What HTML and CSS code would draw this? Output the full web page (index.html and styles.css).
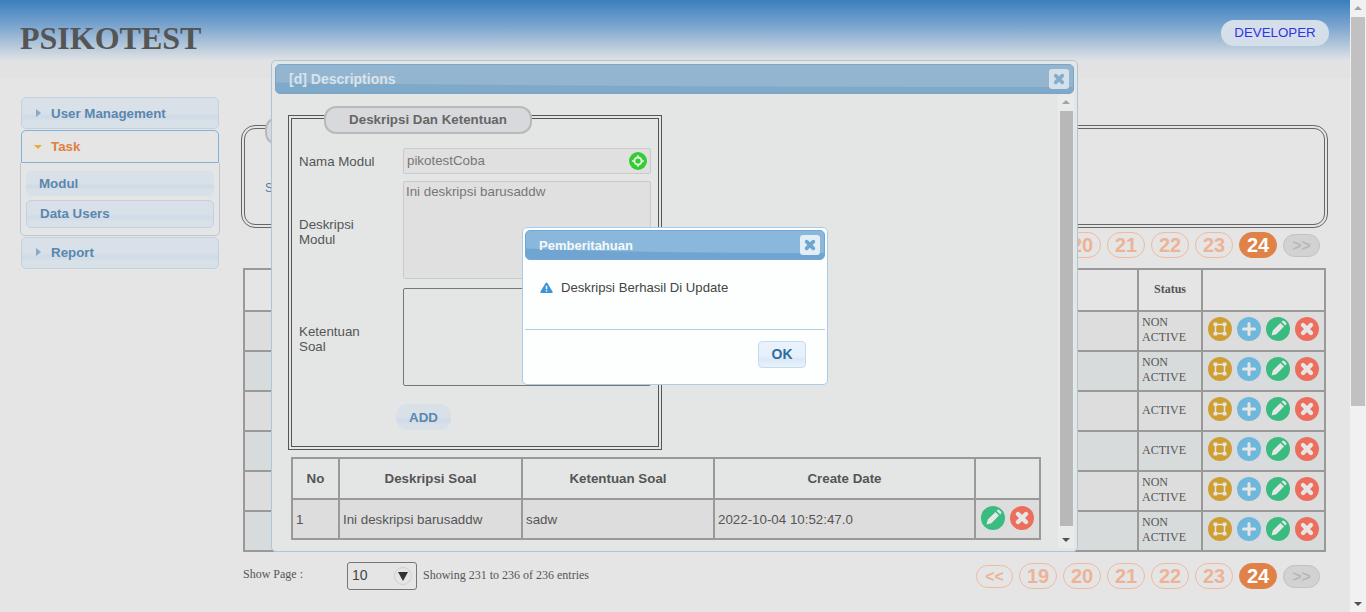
FILE: index.html
```html
<!DOCTYPE html>
<html lang="en">
<head>
	<meta charset="UTF-8">
	<title>Psikotest</title>
	<link rel="stylesheet" href="styles.css">
</head>
<body>
	<svg class="sprite" width="0" height="0">
		<symbol id="ic-expand" viewBox="0 0 24 24">
			<path d="M7.5 7.5h9v9h-9z" fill="none" stroke="currentColor" stroke-width="1.5"/>
			<path d="M5.5 5.5h3.6v3.6H5.5zM14.9 5.5h3.6v3.6h-3.6zM5.5 14.9h3.6v3.6H5.5zM14.9 14.9h3.6v3.6h-3.6z" fill="currentColor"/>
		</symbol>
		<symbol id="ic-plus" viewBox="0 0 24 24">
			<path d="M12 6.5v11M6.5 12h11" fill="none" stroke="currentColor" stroke-width="3" stroke-linecap="round"/>
		</symbol>
		<symbol id="ic-pen" viewBox="0 0 24 24">
			<path d="M5.5 18.5l1.300-4.900 7.600-7.600 3.600 3.600-7.600 7.600zM15.600 4.800l.9-.9a1.200 1.200 0 0 1 1.700 0l1.900 1.900a1.200 1.200 0 0 1 0 1.700l-.9.9z" fill="currentColor"/>
		</symbol>
		<symbol id="ic-cross" viewBox="0 0 24 24">
			<path d="M8 8l8 8M16 8l-8 8" fill="none" stroke="currentColor" stroke-width="4.4" stroke-linecap="round"/>
		</symbol>
	</svg>

	<div class="page">
		<header class="top">
			<h1 class="brand">PSIKOTEST</h1>
			<a class="role" href="#">DEVELOPER</a>
		</header>

		<div class="layout">
			<nav class="side">
				<a class="side-item" href="#"><span class="arrow-right"></span>User Management</a>
				<a class="side-item side-item-open" href="#"><span class="arrow-down"></span>Task</a>
				<div class="side-sub">
					<a class="sub-item sub-plain" href="#">Modul</a>
					<a class="sub-item" href="#">Data Users</a>
				</div>
				<a class="side-item" href="#"><span class="arrow-right"></span>Report</a>
			</nav>

			<main class="content">
				<section class="search-box">
					<div class="search-legend"></div>
					<div class="search-row">Search</div>
				</section>

				<div class="pager">
					<a class="pg pg-small" href="#">&lt;&lt;</a>
					<a class="pg" href="#">19</a>
					<a class="pg" href="#">20</a>
					<a class="pg" href="#">21</a>
					<a class="pg" href="#">22</a>
					<a class="pg" href="#">23</a>
					<a class="pg pg-active" href="#">24</a>
					<a class="pg pg-small pg-off" href="#">&gt;&gt;</a>
				</div>

				<table class="data">
					<colgroup>
						<col class="col-main">
						<col class="col-status">
						<col class="col-act">
					</colgroup>
					<thead>
						<tr><th></th><th>Status</th><th></th></tr>
					</thead>
					<tbody>
						<tr>
							<td></td><td>NON ACTIVE</td>
							<td><div class="acts">
								<span class="ic ic-gold"><svg><use href="#ic-expand"/></svg></span>
								<span class="ic ic-blue"><svg><use href="#ic-plus"/></svg></span>
								<span class="ic ic-green"><svg><use href="#ic-pen"/></svg></span>
								<span class="ic ic-red"><svg><use href="#ic-cross"/></svg></span>
							</div></td>
						</tr>
						<tr>
							<td></td><td>NON ACTIVE</td>
							<td><div class="acts">
								<span class="ic ic-gold"><svg><use href="#ic-expand"/></svg></span>
								<span class="ic ic-blue"><svg><use href="#ic-plus"/></svg></span>
								<span class="ic ic-green"><svg><use href="#ic-pen"/></svg></span>
								<span class="ic ic-red"><svg><use href="#ic-cross"/></svg></span>
							</div></td>
						</tr>
						<tr>
							<td></td><td>ACTIVE</td>
							<td><div class="acts">
								<span class="ic ic-gold"><svg><use href="#ic-expand"/></svg></span>
								<span class="ic ic-blue"><svg><use href="#ic-plus"/></svg></span>
								<span class="ic ic-green"><svg><use href="#ic-pen"/></svg></span>
								<span class="ic ic-red"><svg><use href="#ic-cross"/></svg></span>
							</div></td>
						</tr>
						<tr>
							<td></td><td>ACTIVE</td>
							<td><div class="acts">
								<span class="ic ic-gold"><svg><use href="#ic-expand"/></svg></span>
								<span class="ic ic-blue"><svg><use href="#ic-plus"/></svg></span>
								<span class="ic ic-green"><svg><use href="#ic-pen"/></svg></span>
								<span class="ic ic-red"><svg><use href="#ic-cross"/></svg></span>
							</div></td>
						</tr>
						<tr>
							<td></td><td>NON ACTIVE</td>
							<td><div class="acts">
								<span class="ic ic-gold"><svg><use href="#ic-expand"/></svg></span>
								<span class="ic ic-blue"><svg><use href="#ic-plus"/></svg></span>
								<span class="ic ic-green"><svg><use href="#ic-pen"/></svg></span>
								<span class="ic ic-red"><svg><use href="#ic-cross"/></svg></span>
							</div></td>
						</tr>
						<tr>
							<td></td><td>NON ACTIVE</td>
							<td><div class="acts">
								<span class="ic ic-gold"><svg><use href="#ic-expand"/></svg></span>
								<span class="ic ic-blue"><svg><use href="#ic-plus"/></svg></span>
								<span class="ic ic-green"><svg><use href="#ic-pen"/></svg></span>
								<span class="ic ic-red"><svg><use href="#ic-cross"/></svg></span>
							</div></td>
						</tr>
					</tbody>
				</table>

				<div class="foot">
					<span class="foot-label">Show Page :</span>
					<div class="select"><span class="select-val">10</span><span class="select-btn"></span></div>
					<span class="foot-info">Showing 231 to 236 of 236 entries</span>
					<div class="pager pager-foot">
						<a class="pg pg-small" href="#">&lt;&lt;</a>
						<a class="pg" href="#">19</a>
						<a class="pg" href="#">20</a>
						<a class="pg" href="#">21</a>
						<a class="pg" href="#">22</a>
						<a class="pg" href="#">23</a>
						<a class="pg pg-active" href="#">24</a>
						<a class="pg pg-small pg-off" href="#">&gt;&gt;</a>
					</div>
				</div>
			</main>
		</div>
	</div>

	<div class="pagebar">
		<span class="up"></span>
		<span class="thumb"></span>
		<span class="down"></span>
	</div>

	<!-- dialog deskripsi -->
	<div class="modal">
		<div class="title title-dim">
			<span>[d] Descriptions</span>
			<a class="close close-dim" href="#"><svg><use href="#ic-cross"/></svg></a>
		</div>
		<div class="modal-body">
			<div class="modal-main">
				<div class="field">
					<div class="field-legend">Deskripsi Dan Ketentuan</div>
					<div class="form">
						<label>Nama Modul</label>
						<div class="input">
							<span class="input-val">pikotestCoba</span>
							<svg class="target" viewBox="0 0 18 18">
								<circle cx="9" cy="9" r="9" fill="#33cc33"/>
								<circle cx="9" cy="9" r="3.6" fill="none" stroke="#dff2df" stroke-width="2"/>
								<path d="M9 3v2.4M9 12.6V15M3 9h2.4M12.6 9H15" stroke="#dff2df" stroke-width="1.4"/>
							</svg>
						</div>
						<label class="label-mid">Deskripsi<br>Modul</label>
						<div class="area area-off">Ini deskripsi barusaddw</div>
						<label class="label-low">Ketentuan<br>Soal</label>
						<div class="area"></div>
						<a class="add" href="#">ADD</a>
					</div>
				</div>

				<table class="soal">
					<colgroup>
						<col class="c-no">
						<col class="c-desc">
						<col class="c-ket">
						<col class="c-date">
						<col class="c-act">
					</colgroup>
					<thead>
						<tr><th>No</th><th>Deskripsi Soal</th><th>Ketentuan Soal</th><th>Create Date</th><th></th></tr>
					</thead>
					<tbody>
						<tr>
							<td>1</td>
							<td>Ini deskripsi barusaddw</td>
							<td>sadw</td>
							<td>2022-10-04 10:52:47.0</td>
							<td><div class="acts">
								<span class="ic ic-green"><svg><use href="#ic-pen"/></svg></span>
								<span class="ic ic-red"><svg><use href="#ic-cross"/></svg></span>
							</div></td>
						</tr>
					</tbody>
				</table>
			</div>
			<div class="modalbar">
				<span class="up"></span>
				<span class="thumb"></span>
				<span class="down"></span>
			</div>
		</div>
	</div>

	<!-- pemberitahuan -->
	<div class="alert">
		<div class="title">
			<span>Pemberitahuan</span>
			<a class="close" href="#"><svg><use href="#ic-cross"/></svg></a>
		</div>
		<div class="alert-msg">
			<svg class="warn" viewBox="0 0 14 12"><path d="M7 .5c.5 0 .8.3 1 .6l5.700 9.600c.3.6 0 1.300-.8 1.300H1.100c-.8 0-1.100-.7-.8-1.300L6 1.100c.2-.3.5-.6 1-.6z" fill="#3f94d8"/><path d="M6.200 4h1.600v4H6.200zM6.200 8.900h1.600v1.500H6.200z" fill="#fff"/></svg>
			<span>Deskripsi Berhasil Di Update</span>
		</div>
		<div class="alert-foot">
			<a class="ok" href="#">OK</a>
		</div>
	</div>
</body>
</html>
```

FILE: styles.css
```css
* {
	margin: 0;
	padding: 0;
	box-sizing: border-box;
}
html, body {
	height: 100%;
	overflow: hidden;
}
body {
	display: flex;
	background: #e5e5e5;
	font-family: "Liberation Sans", Arial, sans-serif;
	font-size: 13.33px;
	color: #555;
}
a {
	text-decoration: none;
}
.sprite {
	position: absolute;
}
.page {
	flex: 1;
	min-width: 0;
}

/* header */
.top {
	height: 78px;
	padding: 20px 21px 0 20px;
	display: flex;
	justify-content: space-between;
	align-items: flex-start;
	background: linear-gradient(#3a7fbe 0, #7ba5cf 26px, #dee1e4 60px, #e2e2e2 62px);
}
.brand {
	font-family: "Liberation Serif", "Times New Roman", serif;
	font-size: 32px;
	line-height: 36px;
	color: #555;
}
.role {
	width: 108px;
	height: 26px;
	line-height: 26px;
	text-align: center;
	border-radius: 13px;
	background: #d4dfe9;
	color: #3232ea;
}

/* sidebar */
.layout {
	display: flex;
	padding-left: 21px;
}
.side {
	width: 198px;
	margin-top: 19px;
	margin-right: 22px;
	flex: none;
}
.side-item {
	display: flex;
	align-items: center;
	height: 32px;
	padding-left: 14px;
	border: 1px solid #c3d1df;
	border-radius: 5px;
	background: linear-gradient(#d9e0e8 0, #d8e0e8 50%, #cfdbe7 62%, #d8e0e8 78%);
	color: #5a87ae;
	font-weight: bold;
}
.side-sub + .side-item {
	padding-bottom: 2px;
}
.side-item-open {
	height: 33px;
	margin-top: 1px;
	padding-left: 12px;
	border-color: #7fb2da;
	border-radius: 5px 5px 0 0;
	background: #e5e5e5;
	color: #dd8040;
}
.arrow-right {
	width: 0;
	height: 0;
	margin-right: 10px;
	border: 4px solid transparent;
	border-left: 5px solid #86a9c8;
	border-right: 0;
}
.arrow-down {
	width: 0;
	height: 0;
	margin-right: 9px;
	border: 4px solid transparent;
	border-top: 4px solid #e8aa3c;
	border-bottom: 0;
}
.side-sub {
	margin: 0 -1px 1px;
	padding: 8px 5px 7px;
	height: 73px;
	border: 1px solid #b9c9d8;
	border-top: 0;
	border-radius: 0 0 5px 5px;
}
.sub-item {
	display: block;
	height: 28px;
	line-height: 25px;
	padding-left: 13px;
	border: 1px solid #c3d1df;
	border-radius: 5px;
	background: linear-gradient(#d9e0e8 0, #d8e0e8 50%, #cfdbe7 62%, #d8e0e8 78%);
	color: #5a87ae;
	font-weight: bold;
}
.sub-plain {
	height: 25px;
	line-height: 25px;
	margin-bottom: 4px;
	padding-left: 13px;
	border: 0;
}

/* content */
.content {
	width: 1087px;
	padding-top: 47px;
}
.search-box {
	height: 103px;
	border: 4px double #666;
	border-radius: 14px;
	padding-left: 20px;
	font-size: 12px;
	color: #5f7c97;
}
.search-legend {
	width: 140px;
	height: 28px;
	margin-top: -12px;
	border: 2px solid #b8b8b8;
	border-radius: 12px;
	background: #d8d9dd;
}
.search-row {
	margin-top: 36px;
}
.pager {
	display: flex;
	justify-content: flex-end;
	align-items: center;
	gap: 6px;
	height: 26px;
	margin-top: 4px;
	padding-right: 8px;
}
.pg {
	width: 38px;
	height: 26px;
	line-height: 24px;
	text-align: center;
	border: 1px solid #edbc9f;
	border-radius: 13px;
	color: #edb396;
	font-family: "Liberation Sans", sans-serif;
	font-size: 20px;
	font-weight: bold;
}
.pg-small {
	width: 37px;
	height: 23px;
	line-height: 21px;
	font-size: 16px;
}
.pg-active {
	background: #e08248;
	border-color: #e08248;
	color: #fff;
}
.pg-off {
	background: #d2d2d2;
	border-color: #c2c2c2;
	color: #b8b8bc;
}

/* table utama */
.data {
	width: 1081px;
	margin: 10px 0 0 2px;
	table-layout: fixed;
	border-collapse: collapse;
	border: 2px solid #666;
	font-family: "Liberation Serif", "Times New Roman", serif;
	font-size: 12px;
	line-height: 15px;
	color: #555;
}
.col-main {
	width: 894px;
}
.col-status {
	width: 64px;
}
.col-act {
	width: 123px;
}
.data th, .data td, .soal th, .soal td {
	border: 2px solid #999;
}
.data thead tr {
	height: 42px;
}
.data tbody tr {
	height: 40px;
}
.data th {
	padding-bottom: 2px;
}
.data td {
	padding: 0 3px 2px;
}
.data tbody tr:nth-child(odd) td {
	background: #dddddd;
}
.data tbody tr:nth-child(even) td {
	background: #d8dbdc;
}
.acts {
	display: flex;
	justify-content: center;
	gap: 5px;
	margin-bottom: 2px;
}
.ic {
	width: 24px;
	height: 24px;
	border-radius: 50%;
	color: #e6e6e6;
	flex: none;
}
.ic svg {
	display: block;
	width: 24px;
	height: 24px;
}
.ic-gold {
	background: #cf9f33;
}
.ic-blue {
	background: #70b7dd;
}
.ic-green {
	background: #3abb80;
}
.ic-red {
	background: #ec6f5e;
}

/* bawah */
.foot {
	display: flex;
	align-items: center;
	margin: 10px 0 0 2px;
	height: 28px;
	font-family: "Liberation Serif", serif;
	font-size: 12px;
	color: #555;
}
.foot-label {
	width: 104px;
	padding-bottom: 3px;
}
.select {
	display: flex;
	justify-content: space-between;
	align-items: center;
	width: 70px;
	height: 28px;
	padding: 0 4px;
	border: 1px solid #777;
	border-radius: 3px;
	font-family: "Liberation Sans", sans-serif;
	font-size: 14px;
	color: #444;
}
.select-val {
	padding-bottom: 2px;
}
.select-btn {
	position: relative;
	width: 18px;
	height: 18px;
	border: 1px solid #cfcfcf;
	border-radius: 50%;
}
.select-btn::after {
	content: "";
	position: absolute;
	left: 3px;
	top: 4px;
	border: 5px solid transparent;
	border-top: 9px solid #333;
	border-bottom: 0;
}
.foot-info {
	margin-left: 6px;
	padding-bottom: 2px;
}
.pager-foot {
	margin: 0 0 0 auto;
}

/* scrollbar */
.pagebar {
	flex: none;
	width: 16px;
	height: 612px;
	display: flex;
	flex-direction: column;
	align-items: center;
	background: #f1f1f1;
}
.pagebar .thumb {
	width: 14px;
	height: 389px;
	margin-top: 7px;
	background: #c1c1c1;
}
.up {
	margin-top: 6px;
	border: 4px solid transparent;
	border-top: 0;
	border-bottom: 4px solid #a3a3a3;
}
.down {
	margin-top: auto;
	margin-bottom: 6px;
	border: 4px solid transparent;
	border-bottom: 0;
	border-top: 4px solid #505050;
}

/* dialog */
.modal {
	position: absolute;
	left: 271px;
	top: 60px;
	width: 807px;
	height: 492px;
	padding: 3px;
	border: 1px solid #a9c6da;
	border-radius: 5px;
	background: #e4e6e6;
	display: flex;
	flex-direction: column;
}
.title {
	position: relative;
	overflow: hidden;
	flex: none;
	display: flex;
	justify-content: space-between;
	align-items: center;
	height: 30px;
	padding: 0 4px 0 13px;
	border: 1px solid #76a8cf;
	border-radius: 5px;
	background: #6fa5d0;
	color: #f5f8fb;
	font-size: 14px;
	font-weight: bold;
}
.title::before {
	content: "";
	position: absolute;
	left: -110%;
	top: -60px;
	width: 400%;
	height: 82px;
	border-radius: 50%;
	background: #8ab8dc;
}
.title span, .title a {
	position: relative;
}
.title-dim {
	border-color: #7ba5c6;
	background: #7ea9c9;
	color: #d8e3ec;
}
.title-dim::before {
	background: #93b5cf;
}
.close {
	display: block;
	width: 20px;
	height: 20px;
	border-radius: 3px;
	background: #e3edf6;
	color: #6ea6d2;
}
.close svg {
	display: block;
	width: 20px;
	height: 20px;
}
.close-dim {
	background: #d5e0ea;
	color: #82aed0;
}
.modal-body {
	flex: 1;
	display: flex;
	min-height: 0;
}
.modal-main {
	flex: 1;
	padding: 21px 0 0 13px;
}
.modalbar {
	flex: none;
	width: 16px;
	display: flex;
	flex-direction: column;
	align-items: center;
	background: #e9ebeb;
}
.modalbar .thumb {
	width: 13px;
	height: 415px;
	margin-top: 7px;
	background: #b8b8b8;
}

/* form */
.field {
	width: 374px;
	height: 335px;
	border: 4px double #555;
	padding-left: 7px;
}
.field-legend {
	width: 208px;
	height: 28px;
	line-height: 24px;
	margin: -13px 0 0 25px;
	border: 2px solid #b9b9b9;
	border-radius: 12px;
	background: #d8d9dd;
	color: #666;
	font-weight: bold;
	text-align: center;
}
.form {
	display: grid;
	grid-template-columns: 104px 248px;
	grid-template-rows: 26px 100px 98px;
	row-gap: 7px;
	margin-top: 14px;
	align-items: center;
	line-height: 15px;
}
.form label {
	color: #555;
}
.form .label-mid {
	padding-top: 2px;
}
.form .label-low {
	padding-top: 3px;
}
.input {
	display: flex;
	justify-content: space-between;
	align-items: center;
	height: 26px;
	padding: 0 3px;
	border: 1px solid #cacaca;
	border-radius: 2px;
	background: #e0e0e0;
	color: #777;
}
.input-val {
	padding-bottom: 2px;
}
.target {
	width: 18px;
	height: 18px;
}
.area {
	align-self: start;
	height: 98px;
	border: 1px solid #777;
	border-radius: 2px;
	padding: 2px;
	color: #777;
}
.area-off {
	border-color: #cacaca;
	background: #e0e0e0;
}
.add {
	grid-column: 2;
	width: 55px;
	height: 26px;
	line-height: 27px;
	margin: 11px 0 0 -7px;
	text-align: center;
	border-radius: 11px;
	background: linear-gradient(#d9e0e8 0, #d8e0e8 50%, #cfdbe7 62%, #d8e0e8 78%);
	color: #5a87ae;
	font-weight: bold;
}

/* table soal */
.soal {
	width: 748px;
	margin: 7px 0 0 3px;
	table-layout: fixed;
	border-collapse: collapse;
	border: 2px solid #666;
	color: #555;
}
.c-no {
	width: 47px;
}
.c-desc {
	width: 183px;
}
.c-ket {
	width: 192px;
}
.c-date {
	width: 261px;
}
.c-act {
	width: 65px;
}
.soal thead tr {
	height: 41px;
}
.soal tbody tr {
	height: 40px;
}
.soal td {
	padding: 0 3px;
	background: #dddddd;
	white-space: nowrap;
}

/* pemberitahuan */
.alert {
	position: absolute;
	left: 522px;
	top: 227px;
	width: 306px;
	height: 158px;
	padding: 2px;
	border: 1px solid #a9cde6;
	border-radius: 5px;
	background: #fdfefe;
}
.alert .title {
	font-size: 13px;
}
.alert-msg {
	display: flex;
	align-items: center;
	height: 70px;
	padding: 0 0 14px 15px;
	border-bottom: 1px solid #b3cbde;
	font-size: 13.15px;
	color: #444;
}
.warn {
	width: 13px;
	height: 11px;
	margin-right: 8px;
}
.alert-foot {
	display: flex;
	justify-content: flex-end;
	padding: 11px 19px 0 0;
}
.ok {
	width: 48px;
	height: 27px;
	line-height: 25px;
	text-align: center;
	border: 1px solid #c5dcee;
	border-radius: 4px;
	background: linear-gradient(#eaf3fb 0, #e6f0fa 55%, #dbe9f6 70%, #e8f2fb 100%);
	color: #2f6d9f;
	font-size: 14px;
	font-weight: bold;
}
```
